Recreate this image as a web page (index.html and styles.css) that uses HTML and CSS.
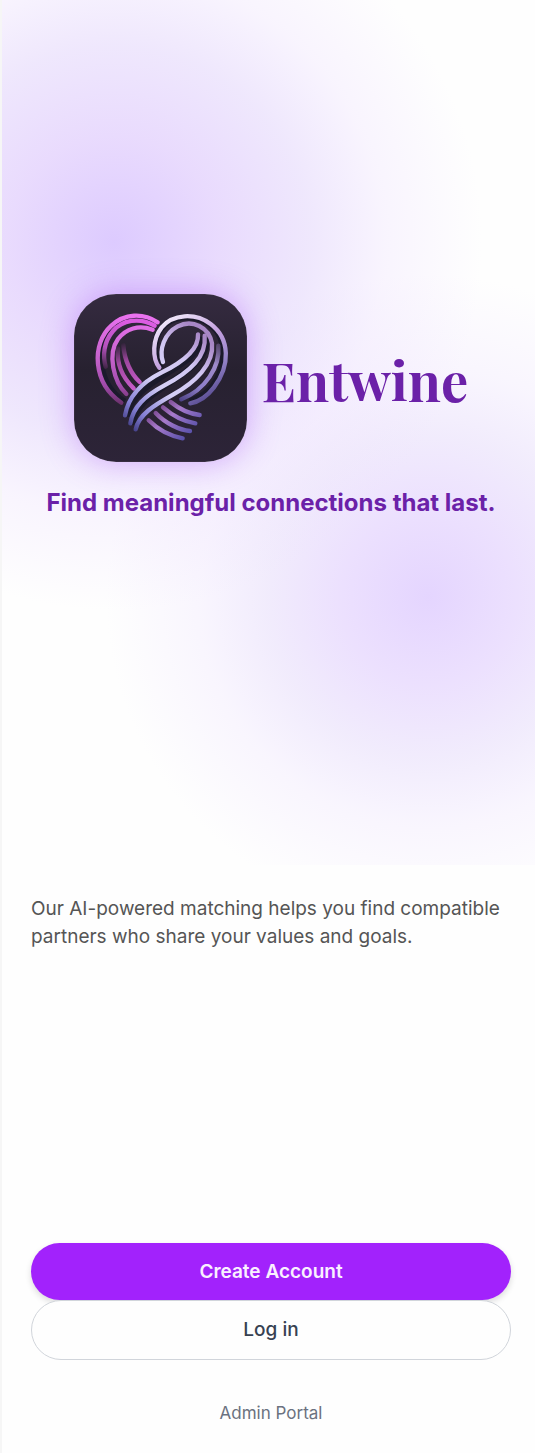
FILE: index.html
```html
<!DOCTYPE html>
<html lang="en">
<head>
<meta charset="utf-8">
<meta name="viewport" content="width=device-width, initial-scale=1">
<title>Entwine</title>
<link rel="stylesheet" href="styles.css">
</head>
<body>
<main class="page">
  <header class="hero">
    <div class="brand">
      <svg class="logo" viewBox="28 27 519 504" aria-hidden="true">
        <defs>
          <linearGradient id="tile" x1="0" y1="0" x2="0" y2="1"><stop offset="0" stop-color="#352b40"/><stop offset=".45" stop-color="#272130"/><stop offset="1" stop-color="#2d2438"/></linearGradient>
          <linearGradient id="pink" gradientUnits="userSpaceOnUse" x1="190" y1="90" x2="175" y2="360"><stop offset="0" stop-color="#ea72ef"/><stop offset=".5" stop-color="#c562cb"/><stop offset=".8" stop-color="#a04aa9"/><stop offset="1" stop-color="#683069"/></linearGradient>
          <linearGradient id="fade" gradientUnits="userSpaceOnUse" x1="180" y1="105" x2="130" y2="255"><stop offset="0" stop-color="#dc5ce2"/><stop offset=".6" stop-color="#b552bd"/><stop offset="1" stop-color="#3d2343"/></linearGradient>
          <linearGradient id="inner" gradientUnits="userSpaceOnUse" x1="165" y1="175" x2="205" y2="310"><stop offset="0" stop-color="#2c2235"/><stop offset=".4" stop-color="#9e479f"/><stop offset="1" stop-color="#c65bc9"/></linearGradient>
          <linearGradient id="loop" gradientUnits="userSpaceOnUse" x1="290" y1="110" x2="440" y2="350"><stop offset="0" stop-color="#f0e8fa"/><stop offset=".4" stop-color="#c4a1df"/><stop offset=".7" stop-color="#9584c8"/><stop offset="1" stop-color="#51458c"/></linearGradient>
          <linearGradient id="fourth" gradientUnits="userSpaceOnUse" x1="460" y1="170" x2="350" y2="350"><stop offset="0" stop-color="#4b3d60"/><stop offset=".3" stop-color="#a08bcb"/><stop offset=".7" stop-color="#8c7dc8"/><stop offset="1" stop-color="#4d4285"/></linearGradient>
          <linearGradient id="ribbon" gradientUnits="userSpaceOnUse" x1="420" y1="160" x2="190" y2="430"><stop offset="0" stop-color="#a887c6"/><stop offset=".25" stop-color="#d1c6f2"/><stop offset=".55" stop-color="#d5cff6"/><stop offset=".83" stop-color="#8580d5"/><stop offset="1" stop-color="#3d3980"/></linearGradient>
          <linearGradient id="tail" gradientUnits="userSpaceOnUse" x1="285" y1="350" x2="370" y2="455"><stop offset="0" stop-color="#713d83"/><stop offset=".4" stop-color="#a77acb"/><stop offset="1" stop-color="#5750a9"/></linearGradient>
        </defs>
        <rect x="28" y="27" width="519" height="504" rx="126" fill="url(#tile)" stroke="#4e4458" stroke-width="2"/>
        <g fill="none" stroke="#1b1a2b" stroke-width="18">
          <path d="M280 116C235 90 178 92 140 128C88 178 98 300 180 350"/>
          <path d="M290 250C262 210 265 152 300 120C345 84 415 92 453 134C498 190 480 315 375 348"/>
          <path d="M410 155C411 250 205 275 188 395M430 160C421 280 215 305 204 420"/>
        </g>
        <g fill="none" stroke-width="13" stroke-linecap="round">
          <g stroke="url(#inner)">
            <path d="M160 190C155 240 178 282 207 310"/>
            <path d="M176 180C179 226 199 267 225 291"/>
          </g>
          <path stroke="url(#fade)" d="M270 122C224 95 172 106 145 138C116 172 114 214 123 245"/>
          <g stroke="url(#pink)">
            <path d="M279 112C235 83 180 85 140 122C79 177 84 294 170 353"/>
            <path d="M264 134C222 118 184 131 160 162C127 207 147 291 185 327"/>
          </g>
          <g stroke="url(#tail)">
            <path d="M318 351C345 373 372 386 405 390"/>
            <path d="M295 367C325 393 360 410 392 415"/>
            <path d="M273 384C302 415 344 435 376 438"/>
            <path d="M252 406C282 436 321 454 354 460"/>
          </g>
          <path stroke="url(#fourth)" d="M461 182C467 246 422 314 350 343"/>
          <g stroke="url(#loop)">
            <path d="M284 248C262 219 263 163 291 127C324 87 391 82 438 117C497 162 497 242 448 307C429 332 404 350 377 355"/>
          </g>
          <g stroke="url(#ribbon)">
            <path d="M295 231C282 194 299 145 339 124C383 102 433 126 442 175C449 238 390 293 325 329C268 361 222 389 213 433"/>
            <path d="M420 152C426 214 378 260 298 302C240 333 205 366 197 415"/>
            <path d="M400 148C403 192 355 231 290 263C234 291 192 330 181 391"/>
          </g>
        </g>
      </svg>
      <h1 class="name">Entwine</h1>
    </div>
    <p class="tagline">Find meaningful connections that last.</p>
  </header>
  <p class="description">Our AI-powered matching helps you find compatible partners who share your values and goals.</p>
  <div class="actions">
    <button class="button primary" type="button">Create Account</button>
    <button class="button secondary" type="button">Log in</button>
    <a class="admin" href="#">Admin Portal</a>
  </div>
</main>
</body>
</html>
```
FILE: styles.css
```css
* {
  box-sizing: border-box;
}

body {
  margin: 0;
  background: #fefefe;
  font-family: Inter, "Liberation Sans", sans-serif;
}

h1,
p {
  margin: 0;
}

.page {
  display: flex;
  flex-direction: column;
  min-height: 100vh;
  border-left: 2px solid #f6f6f6;
}

.hero {
  display: flex;
  flex-direction: column;
  align-items: center;
  gap: 23px;
  padding: 294px 24px 344px 29px;
  background:
    radial-gradient(circle at 21% 28%, rgba(205, 178, 255, 0.68), rgba(217, 192, 253, 0.57) 14%, rgba(218, 200, 251, 0.42) 26%, rgba(236, 222, 255, 0.3) 36%, transparent 49%),
    radial-gradient(circle at 80% 69%, rgba(214, 190, 255, 0.64), rgba(220, 198, 254, 0.53) 12%, rgba(222, 208, 250, 0.4) 22%, rgba(238, 228, 255, 0.33) 31%, transparent 44%);
}

.brand {
  display: flex;
  align-items: center;
  gap: 15px;
}

.logo {
  width: 173px;
  height: 168px;
  flex-shrink: 0;
  border-radius: 42px;
  box-shadow: 0 0 32px rgba(168, 85, 247, 0.45);
}

.name {
  padding-top: 4px;
  color: #6b21a8;
  font: 700 54px/64px "Playfair Display", "Liberation Serif", serif;
}

.tagline {
  color: #6b21a8;
  font-size: 24px;
  font-weight: 700;
  line-height: 36px;
  text-align: center;
}

.description {
  padding: 30px 24px 0 29px;
  color: #555;
  font-size: 19px;
  line-height: 28px;
}

.actions {
  display: flex;
  flex-direction: column;
  margin-top: auto;
  padding: 32px 24px 28px 29px;
}

.button {
  height: 57px;
  border: 0;
  border-radius: 30px;
  font: 500 19px/28px Inter, "Liberation Sans", sans-serif;
  cursor: pointer;
}

.primary {
  background: #a222fc;
  color: #faf0ff;
  font-weight: 600;
  box-shadow: 0 3px 6px rgba(0, 0, 0, 0.14);
}

.secondary {
  position: relative;
  height: 60px;
  border: 1px solid #d1d5db;
  background: #fefefe;
  color: #374151;
}

.admin {
  align-self: center;
  margin-top: 41px;
  color: #6b7280;
  font-size: 17px;
  line-height: 24px;
  text-decoration: none;
}
```
